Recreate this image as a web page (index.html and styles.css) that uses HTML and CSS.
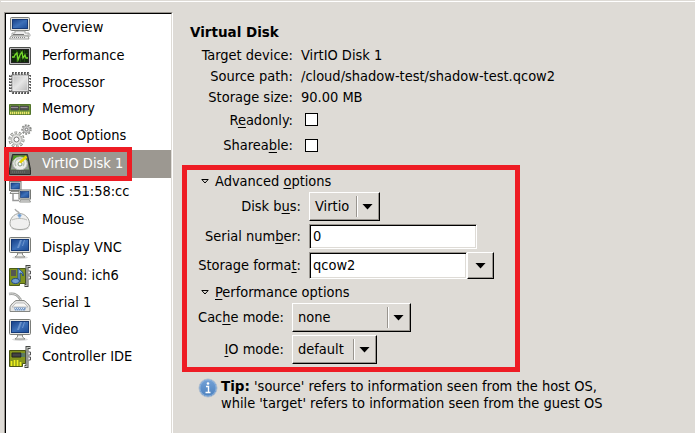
FILE: index.html
```html
<!DOCTYPE html>
<html lang="en">
<head>
<meta charset="utf-8">
<title>Virtual Disk</title>
<link rel="stylesheet" href="styles.css">
</head>
<body>
<svg class="defs" width="0" height="0" aria-hidden="true">
  <defs>
    <linearGradient id="blue" x1="0" y1="0" x2="1" y2="1"><stop offset="0" stop-color="#173f86"/><stop offset=".5" stop-color="#3d70b8"/><stop offset="1" stop-color="#1c4c98"/></linearGradient>
    <linearGradient id="metal" x1="0" y1="0" x2="1" y2="1"><stop offset="0" stop-color="#bcbcbc"/><stop offset=".5" stop-color="#e6e6e6"/><stop offset="1" stop-color="#b4b4b4"/></linearGradient>
    <linearGradient id="info" x1="0" y1="0" x2="0" y2="1"><stop offset="0" stop-color="#75a2d7"/><stop offset="1" stop-color="#4b80bd"/></linearGradient>
    <symbol id="monitor" viewBox="0 0 24 24">
      <ellipse cx="12" cy="21.500" rx="8" ry="1.500" fill="#ddd"/>
      <rect x="1.500" y="1.500" width="21" height="15" rx="1" fill="#e4e4e0" stroke="#7b7d79"/>
      <rect x="3.500" y="3.500" width="17" height="11" fill="url(#blue)" stroke="#163a78"/>
      <path d="M9 12l3-8h2l-3 8zM14 10l2-6h1l-2 6z" fill="#6c94cd"/>
      <path d="M9.500 17h5v2l2.500 2h-10l2.500-2z" fill="#f2f2f0" stroke="#80827d" stroke-width=".9"/>
    </symbol>
    <symbol id="computer" viewBox="0 0 24 24">
      <rect x="2.500" y="1.500" width="19" height="13" rx="1" fill="#deded9" stroke="#7b7d79"/>
      <rect x="4.500" y="3.500" width="15" height="9" fill="url(#blue)" stroke="#163a78"/>
      <path d="M7 15h10v2h4v3H4v-3h3z" fill="#eee" stroke="#989a96" stroke-width=".8"/>
      <path d="M5 18.500h11" stroke="#777"/>
      <path d="M3 20h17l1 3H1.500z" fill="#eee" stroke="#888a85" stroke-width=".8"/>
      <path d="M4 21.500h14" stroke="#888" stroke-dasharray="1 1"/>
      <path d="M19 18c4-1 4 2 2 3" fill="none" stroke="#bbb"/>
    </symbol>
    <symbol id="graph" viewBox="0 0 24 24">
      <rect x="1.500" y="3.500" width="21" height="17" rx=".5" fill="#bbb" stroke="#4d4f4c"/>
      <rect x="3.500" y="5.500" width="17" height="13" fill="#102b09" stroke="#222"/>
      <path d="M4 9.500h16M4 13.500h16M8.500 6v12M12.500 6v12M16.500 6v12" stroke="#28501a" stroke-width=".7"/>
      <path d="M4 13h2l1-2 2-2 1 7 2-5 2-3 1 6 2-3 1 3h2" fill="none" stroke="#77dd2b" stroke-width="1.300"/>
    </symbol>
    <symbol id="chip" viewBox="0 0 24 24">
      <path d="M4 3h17M4 21h17" fill="none" stroke="#555" stroke-width="4" stroke-dasharray="2 1"/>
      <path d="M3 4v17M21 4v17" fill="none" stroke="#555" stroke-width="4" stroke-dasharray="2 1"/>
      <rect x="2.500" y="2.500" width="19" height="19" rx="1" fill="none" stroke="#ddd" stroke-width="1.500" stroke-dasharray="1 2" stroke-dashoffset="-2"/>
      <rect x="4" y="4" width="16.500" height="16.500" fill="url(#metal)" stroke="#858585"/>
      <rect x="5" y="5" width="14.500" height="14.500" fill="none" stroke="#eee" stroke-width=".7"/>
    </symbol>
    <symbol id="memory" viewBox="0 0 24 24">
      <path d="M1.500 7.500h21v10h-21z" fill="#70983b" stroke="#52752b"/>
      <path d="M3 9h7.500v4H3zM12 9h8.500v4H12z" fill="#555753" stroke="#414540" stroke-width=".7"/>
      <path d="M3 10.500h7M12.500 10.500h7" stroke="#9a8f99"/>
      <path d="M2 16h20" stroke="#ece66a" stroke-width="2.500" stroke-dasharray="1.300 .7"/>
    </symbol>
    <symbol id="gears" viewBox="0 0 24 24">
      <g fill="none">
        <circle cx="8.500" cy="15.500" r="6.800" stroke="#868884" stroke-width="2.600" stroke-dasharray="2.600 1.670"/>
        <circle cx="8.500" cy="15.500" r="6.600" stroke="#e4e4e2" stroke-width="1.400" stroke-dasharray="1.500 2.650" stroke-dashoffset="-.5"/>
        <circle cx="8.500" cy="15.500" r="5" fill="#e6e6e4" stroke="#b4b6b2"/>
        <circle cx="8.500" cy="15.500" r="2.500" fill="#fff" stroke="#777"/>
        <circle cx="18.500" cy="5.500" r="4.300" stroke="#858783" stroke-width="1.800" stroke-dasharray="1.800 1.200"/>
        <circle cx="18.500" cy="5.500" r="3.500" fill="#ccc" stroke="#aaa"/>
        <circle cx="18.500" cy="5.500" r="1.300" fill="#fff" stroke="#777"/>
      </g>
    </symbol>
    <symbol id="disk" viewBox="0 0 24 24">
      <path d="M4.500 2.500h15l3 15v5h-21v-5z" fill="#555753" stroke="#292b29"/>
      <path d="M5.500 3.500h13l2.500 14H3z" fill="#529b22"/>
      <path d="M4.500 9L3 17.500h18L19.500 9z" fill="#9a9c98"/>
      <ellipse cx="12" cy="11.500" rx="7.200" ry="6.500" fill="#eeeeea" stroke="#b9bbb6"/>
      <path d="M8 14a4.500 4.500 0 1 1 7 0" fill="none" stroke="#b3beae" stroke-width="1.300"/>
      <circle cx="12" cy="12" r="2" fill="#fff" stroke="#829678"/>
      <path d="M18.500 4.500l-6.500 6" stroke="#edd400" stroke-width="2.500"/>
      <path d="M2 18h20v4H2z" fill="#555753"/><path d="M4 20h14" stroke="#777" stroke-dasharray="1 1"/>
    </symbol>
    <symbol id="network" viewBox="0 0 24 24">
      <path d="M5 14v6.500h6" fill="none" stroke="#999" stroke-width="1.500"/>
      <g id="net-pc"><rect x="1.500" y="1.500" width="11.500" height="9" fill="#e8e8e4" stroke="#777975"/><rect x="3" y="3" width="8.500" height="6" fill="url(#blue)" stroke="#163a78" stroke-width=".7"/><path d="M3 11.500h9l1 2H2z" fill="#eee" stroke="#777975" stroke-width=".8"/></g>
      <use href="#net-pc" x="9.500" y="8.500"/>
    </symbol>
    <symbol id="mouse" viewBox="0 0 24 24">
      <path d="M11 7c2-3-3-3-4-6" fill="none" stroke="#aaa" stroke-width="1.300"/>
      <ellipse cx="12" cy="20" rx="9" ry="2.500" fill="#ddd"/>
      <path d="M11.500 5.500c6 0 10 5.500 10 10s-4 6-9.500 6S2 20 2 15.500s3.500-10 9.500-10z" fill="#f0f0ef" stroke="#a2a4a0"/>
      <path d="M4 12c4-2 11-2 15 0M11.500 7v4" fill="none" stroke="#b9bbb7"/>
      <path d="M9 7l2.500-1.500L14 7l-2.500 4z" fill="#9cbce0"/>
      <circle cx="11.500" cy="7.500" r="1.300" fill="#6b99cc"/>
    </symbol>
    <symbol id="bracket" viewBox="0 0 24 24">
      <path d="M22.500 2.500h-3.500v19h-2.500" fill="none" stroke="#454744" stroke-width="3"/>
      <path d="M22.500 2.500h-3.500v19h-2.500" fill="none" stroke="#c6c8c4" stroke-width="1.200"/>
      <path d="M20.500 7h2v3h-2M20.500 12h2v3h-2" fill="#eee" stroke="#555"/>
    </symbol>
    <symbol id="sound" viewBox="0 0 24 24">
      <path d="M1.500 4.500h16v15h-6v2h-10z" fill="#80931e" stroke="#4b5d15"/>
      <path d="M3 6h5v6H3z" fill="#555753"/>
      <path d="M10 17V4c2 3 6 3 5 8 0-3-3-3-3-3v9" fill="#8db5e5" stroke="#204a87"/>
      <ellipse cx="7.500" cy="17" rx="4" ry="2.600" fill="#729fcf" stroke="#204a87"/>
      <use href="#bracket"/>
    </symbol>
    <symbol id="serial" viewBox="0 0 24 24">
      <path d="M1 3c7-1 9 2 12 6" fill="none" stroke="#959793" stroke-width="2.500"/>
      <path d="M1 3c7-1 9 2 12 6" fill="none" stroke="#ddd"/>
      <path d="M8 9.500h8c3 2 6 5 6 7v4H2v-4c0-2 3-5 6-7z" fill="#e4e4e2" stroke="#858783"/>
      <path d="M8 12h8l4 4H4z" fill="#f7f7f5" stroke="#aaa" stroke-width=".7"/>
      <path d="M6 16.500h12l-1 3H7z" fill="#7799c5"/><path d="M7 17.500h10M8 19h8" stroke="#d8e5f5" stroke-dasharray="1 1"/>
    </symbol>
    <symbol id="card" viewBox="0 0 24 24">
      <path d="M1.500 5.500h16v13h-3v3h-13z" fill="#83941d" stroke="#4c5718"/>
      <path d="M4 8h9v4H4z" fill="#444" stroke="#222"/><path d="M13 9h4M13 11h4" stroke="#3465a4"/>
      <path d="M3.500 21v-5M6.500 21v-6M9.500 21v-6M12.500 21v-4" stroke="#edef20" stroke-width="1.700"/>
      <use href="#bracket"/>
    </symbol>
  </defs>
</svg>
<div class="window">
  <nav class="hardware">
    <ul class="list">
      <li class="h28"><svg class="icon"><use href="#computer"/></svg><span>Overview</span></li>
      <li class="h28"><svg class="icon"><use href="#graph"/></svg><span>Performance</span></li>
      <li class="h26"><svg class="icon"><use href="#chip"/></svg><span>Processor</span></li>
      <li class="h26"><svg class="icon"><use href="#memory"/></svg><span>Memory</span></li>
      <li class="h28"><svg class="icon"><use href="#gears"/></svg><span>Boot Options</span></li>
      <li class="h28 selected"><svg class="icon"><use href="#disk"/></svg><span>VirtIO Disk 1</span><i class="mark"></i></li>
      <li class="h28"><svg class="icon"><use href="#network"/></svg><span>NIC :51:58:cc</span></li>
      <li class="h28"><svg class="icon"><use href="#mouse"/></svg><span>Mouse</span></li>
      <li class="h28"><svg class="icon"><use href="#monitor"/></svg><span>Display VNC</span></li>
      <li class="h28"><svg class="icon"><use href="#sound"/></svg><span>Sound: ich6</span></li>
      <li class="h26"><svg class="icon"><use href="#serial"/></svg><span>Serial 1</span></li>
      <li class="h28"><svg class="icon"><use href="#monitor"/></svg><span>Video</span></li>
      <li class="h26"><svg class="icon"><use href="#card"/></svg><span>Controller IDE</span></li>
    </ul>
  </nav>
  <main class="details">
    <h1>Virtual Disk</h1>
    <div class="summary">
      <span class="label">Target device:</span><span>VirtIO Disk 1</span>
      <span class="label">Source path:</span><span>/cloud/shadow-test/shadow-test.qcow2</span>
      <span class="label">Storage size:</span><span>90.00 MB</span>
      <span class="label">R<u>e</u>adonly:</span><span class="check"></span>
      <span class="label">Sharea<u>b</u>le:</span><span class="check"></span>
    </div>
    <section class="options">
      <h2><svg class="expander" viewBox="0 0 8 5"><path d="M.8.5h6.400L4 4z"/></svg><span>Advanced <u>o</u>ptions</span></h2>
      <div class="fields">
        <span class="label">Disk b<u>u</u>s:</span>
        <div class="select bus"><span>Virtio</span><i class="sep"></i><i class="arrow"></i></div>
        <span class="label">Serial num<u>b</u>er:</span>
        <div class="entry serial">0</div>
        <span class="label">Storage forma<u>t</u>:</span>
        <div class="combo"><div class="entry format">qcow2</div><div class="button"><i class="arrow"></i></div></div>
      </div>
      <h2 class="perf"><svg class="expander" viewBox="0 0 8 5"><path d="M.8.5h6.400L4 4z"/></svg><span><u>P</u>erformance options</span></h2>
      <div class="fields tuning">
        <span class="label">Cac<u>h</u>e mode:</span>
        <div class="select cache"><span>none</span><i class="sep"></i><i class="arrow"></i></div>
        <span class="label"><u>I</u>O mode:</span>
        <div class="select io"><span>default</span><i class="sep"></i><i class="arrow"></i></div>
      </div>
    </section>
    <div class="tip">
      <svg class="info" viewBox="0 0 20 20"><circle cx="10" cy="10" r="9" fill="url(#info)" stroke="#aebed0"/><circle cx="10" cy="10" r="8" fill="none" stroke="#8bb1dd" stroke-width=".8"/><circle cx="10" cy="5.500" r="1.300" fill="#fff"/><path d="M8 8.500h2.500v6M7.500 14.500h5" fill="none" stroke="#fff" stroke-width="1.400"/></svg>
      <p><b>Tip:</b> 'source' refers to information seen from the host OS,<br>while 'target' refers to information seen from the guest OS</p>
    </div>
  </main>
</div>
</body>
</html>
```
FILE: styles.css
```css
* { box-sizing: border-box; }
html, body { margin: 0; height: 100%; overflow: hidden; }
body {
  background: #dedbd6;
  color: #000;
  font: 14.48px/20px "DejaVu Sans Condensed", "DejaVu Sans", sans-serif;
  font-stretch: condensed;
}
.defs { position: absolute; }
u { text-underline-offset: 2px; text-decoration-thickness: 1px; text-decoration-skip-ink: none; }
.window { display: flex; height: 433px; padding-top: 12px; background: linear-gradient(#fff, #fff) 1px 1px / 100% 1px no-repeat; }

.hardware {
  width: 169px;
  height: 425px;
  margin-left: 4px;
  flex: none;
  border: 1px solid;
  border-color: #99958f #fff #fff #99958f;
}
.list {
  height: 100%;
  margin: 0;
  padding: 0;
  list-style: none;
  background: #fff;
  border: 1px solid;
  border-color: #000 #dedbd6 #dedbd6 #000;
}
.list li { display: flex; align-items: center; gap: 10px; padding-left: 2px; position: relative; }
.list span { position: relative; top: -1px; }
.list .h28 { height: 28px; }
.list .h26 { height: 26px; }
.icon { width: 24px; height: 24px; flex: none; }
.list .selected { background: #9c9891; color: #fff; }
.mark { position: absolute; left: -2px; top: -3px; width: 128px; height: 34px; border: 5px solid #ee1c24; }

.details { padding: 10px 0 0 9px; flex: 1; white-space: nowrap; }
h1, .tip b { font-family: "DejaVu Sans", sans-serif; font-size: 13.5px; font-stretch: normal; font-weight: bold; }
h1 { margin: 0 0 2px 8px; line-height: 20px; }
.summary { display: grid; grid-template-columns: 111px auto; grid-template-rows: 21px 21px 21px 25px 26px; column-gap: 8px; align-items: center; }
.label { text-align: right; }
.check { width: 13px; height: 13px; margin-left: 4px; border: 1px solid #000; background: #fff; }

.options { width: 338px; height: 207px; margin-top: 7px; padding: 1px 0 0 11px; border: 5px solid #ee1c24; }
h2 { display: flex; align-items: center; gap: 6px; margin: 0; padding-left: 3px; font-size: inherit; line-height: 20px; font-weight: normal; }
.expander { width: 8px; height: 5px; fill: none; stroke: #000; }
.fields { display: grid; grid-template-columns: 103px auto; grid-template-rows: 29px 25px 27px; gap: 3px 8px; margin-top: 1px; align-items: center; }
.fields .label { position: relative; top: -1px; }
.tuning { grid-template-columns: 86px auto; grid-template-rows: 29px 29px; }
.perf { margin-top: 3px; }
.select, .button {
  display: flex;
  align-items: center;
  border: 1px solid;
  border-color: #fff #000 #000 #fff;
  box-shadow: inset -1px -1px #99958f;
}
.select { height: 29px; padding: 0 6px 0 5px; }
.select span { flex: 1; line-height: 18px; padding-bottom: 2px; }
.sep { width: 2px; height: 21px; margin-right: 4px; border-left: 1px solid #99958f; border-right: 1px solid #fff; }
.arrow { width: 11px; height: 6px; background: #000; clip-path: polygon(0 0, 100% 0, 50% 100%); }
.bus { width: 71px; }
.cache { width: 119px; }
.io { width: 85px; }
.entry {
  height: 25px;
  padding-left: 3px;
  line-height: 22px;
  background: #fff;
  border: 1px solid;
  border-color: #99958f #fff #fff #99958f;
  box-shadow: inset 1px 1px #000, inset -1px -1px #dedbd6;
}
.serial { width: 168px; }
.combo { display: flex; }
.format { width: 158px; height: 27px; line-height: 24px; }
.button { width: 27px; height: 27px; justify-content: center; }

.tip { display: flex; gap: 3px; margin: 6px 0 0 16px; }
.info { width: 20px; height: 20px; }
.tip p { margin: 0; line-height: 17px; }
.tip b { line-height: 1; }
```
